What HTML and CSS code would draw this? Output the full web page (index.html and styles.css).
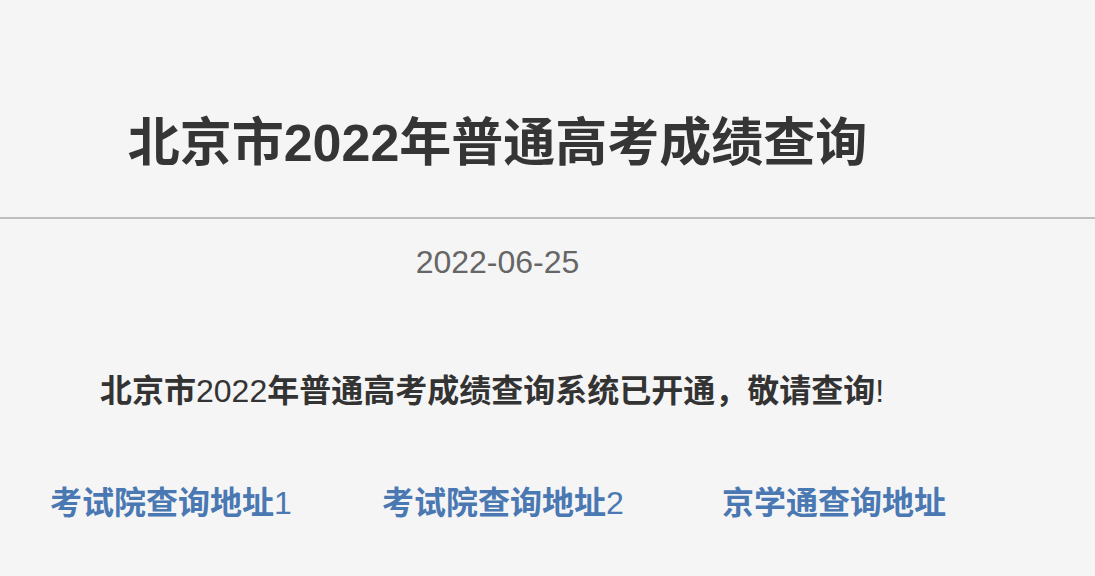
FILE: index.html
```html
<!DOCTYPE html>
<html lang="zh-CN">
<head>
<meta charset="utf-8">
<title>北京市2022年普通高考成绩查询</title>
<link rel="stylesheet" href="styles.css">
</head>
<body>
  <header class="masthead">
    <div class="column">
      <h1 class="title">北京市2022年普通高考成绩查询</h1>
    </div>
  </header>
  <main class="column article">
    <p class="date">2022-06-25</p>
    <p class="lead">北京市<span class="num">2022</span>年普通高考成绩查询系统已开通，敬请查询<span class="num">!</span></p>
    <nav class="links">
      <a class="link" href="#">考试院查询地址<span class="num">1</span></a>
      <a class="link" href="#">考试院查询地址<span class="num">2</span></a>
      <a class="link" href="#">京学通查询地址</a>
    </nav>
  </main>
</body>
</html>
```
FILE: styles.css
```css
html, body {
  margin: 0;
  padding: 0;
  background: #f5f5f5;
}

body {
  font-family: "Liberation Sans", "Noto Sans CJK SC", sans-serif;
  color: #333;
}

.column {
  margin-left: 50px;
  width: 895px;
}

.masthead {
  padding-top: 112px;
  padding-bottom: 43px;
  border-bottom: 2px solid #bfbfbf;
}

.title {
  margin: 0;
  font-size: 52px;
  line-height: 1.2;
  font-weight: bold;
  text-align: center;
  color: #353535;
}

.date {
  margin: 24px 0 0;
  font-size: 32px;
  line-height: 1.2;
  text-align: center;
  color: #666;
}

.lead {
  margin: 90px 0 0;
  font-size: 32px;
  line-height: 1.2;
  font-weight: bold;
  text-indent: 50px;
  color: #333;
  white-space: nowrap;
}

.num {
  font-weight: normal;
}

.links {
  display: grid;
  grid-template-columns: 332px 340px auto;
  margin-top: 74px;
}

.link {
  font-size: 32px;
  line-height: 1.2;
  font-weight: bold;
  color: #4a78b2;
  text-decoration: none;
  white-space: nowrap;
}
```
